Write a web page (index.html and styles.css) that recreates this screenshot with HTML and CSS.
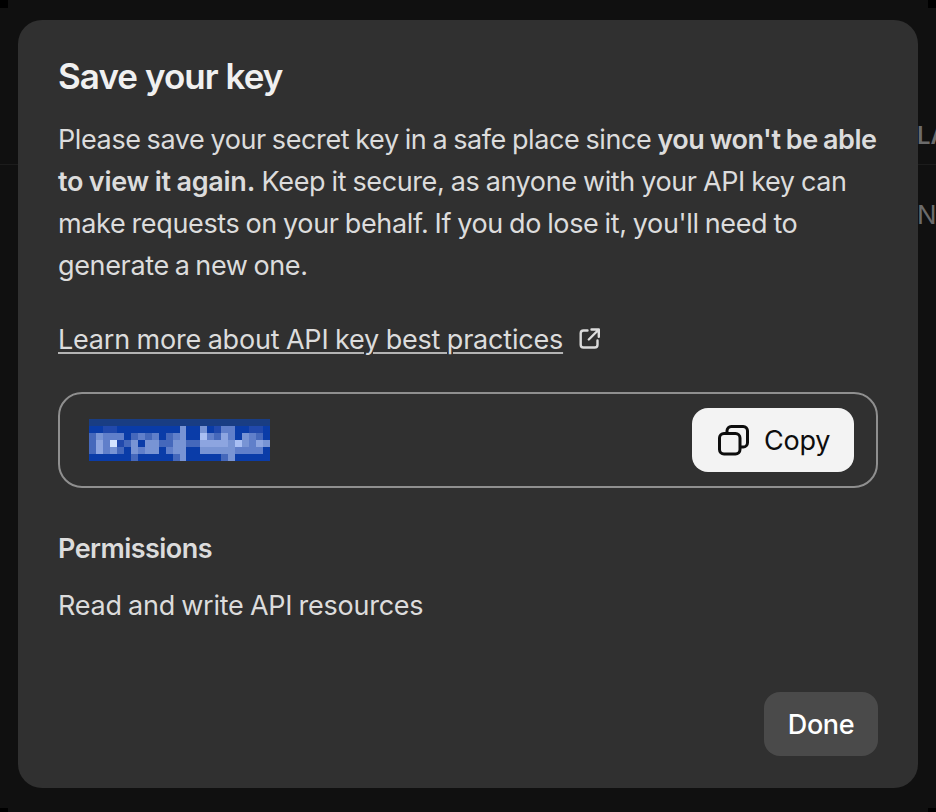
FILE: index.html
```html
<!DOCTYPE html>
<html lang="en">
<head>
<meta charset="utf-8">
<title>Save your key</title>
<link rel="stylesheet" href="styles.css">
</head>
<body>
<div class="page">
  <div class="backdrop" aria-hidden="true">
    <div class="table-head"><span>LA</span></div>
    <div class="table-row"><span>N</span></div>
  </div>
  <i class="corner tl"></i><i class="corner tr"></i><i class="corner bl"></i><i class="corner br"></i>
  <main class="modal">
    <h1 class="title">Save your key</h1>
    <p class="text"><span class="l1">Please save your secret key in a safe place since </span><strong class="b1">you won't be able</strong><br><strong class="b2">to view it again.</strong> <span class="l2">Keep it secure, as anyone with your API key can</span><br><span class="l3">make requests on your behalf. If you do lose it, you'll need to</span><br><span class="l4">generate a new one.</span></p>
    <div class="learn">
      <a class="link">Learn more about API key best practices</a>
      <svg class="external" viewBox="0 0 22 22" width="22" height="22"><path d="M8.500 2.500H4.500A2.800 2.800 0 0 0 1.700 5.300V16.700A2.800 2.800 0 0 0 4.500 19.500H15.700A2.800 2.800 0 0 0 18.500 16.700V12.500M12.500 1.500H19.800V8.800M19.300 2L9.800 11.500"/></svg>
    </div>
    <div class="field">
      <svg class="key" viewBox="0 0 26 6" width="181" height="42" preserveAspectRatio="none" shape-rendering="crispEdges">
        <path fill="#0a3ca8" d="M0 0h26v6H0z"/>
        <path fill="#193d83" d="M0 0h26v1H0z"/>
        <path fill="#2149ac" d="M2 1h2v1H2zM18 1h1v1h-1zM23 1h2v1h-2zM22 2h1v1h-1zM4 3h1v1H4z"/>
        <path fill="#4568bb" d="M0 2h1v3H0zM6 2h1v1H6zM8 2h1v1H8zM11 2h1v1h-1zM5 3h1v1H5zM10 3h2v1h-2zM14 3h2v1h-2zM4 4h1v1H4zM6 5h1v1H6zM12 5h1v1h-1zM19 5h1v1h-1zM18 2h1v1h-1zM24 2h1v1h-1z"/>
        <path fill="#607fca" d="M2 2h3v1H2zM2 3h1v2H2zM7 2h1v1H7zM9 2h1v1H9zM12 2h1v1h-1zM19 1h2v1h-2zM17 2h1v1h-1zM20 2h1v1h-1zM22 3h2v2h-2zM23 2h1v1h-1zM7 4h1v1H7zM11 4h1v1h-1zM21 4h1v1h-1zM24 4h1v1h-1z"/>
        <path fill="#7894d4" d="M1 2h1v1H1zM13 1h1v5h-1zM16 1h1v1h-1zM6 3h1v2H6zM8 3h2v2H8zM12 3h1v2h-1zM3 4h1v1H3zM16 4h4v1h-4zM20 3h1v3h-1zM22 2h1v2h-1zM25 3h1v1h-1z"/>
        <path fill="#8da5e0" d="M1 3h1v2H1zM16 3h4v1h-4zM19 2h1v1h-1zM24 3h1v1h-1z"/>
        <path fill="#a9bff3" d="M16 2h1v1h-1zM21 3h1v1h-1z"/>
        <path fill="#d5e4ff" d="M3 3h1v1H3z"/>
      </svg>
      <button class="copy"><svg viewBox="0 0 32 32" width="32" height="32"><rect x="2.500" y="9.500" width="20.500" height="20.500" rx="4.500"/><path d="M10 9.500V6.800A4.300 4.300 0 0 1 14.300 2.500H26.200A4.300 4.300 0 0 1 30.500 6.800V18.700A4.300 4.300 0 0 1 26.200 23H23"/></svg><span>Copy</span></button>
    </div>
    <h2 class="subtitle">Permissions</h2>
    <p class="perm">Read and write API resources</p>
    <div class="actions"><button class="done">Done</button></div>
  </main>
</div>
</body>
</html>
```
FILE: styles.css
```css
* { box-sizing: border-box; }
body { margin: 0; background: #101010; font-family: Inter, "Liberation Sans", sans-serif; }
.page { position: relative; width: 936px; height: 812px; padding: 20px 18px; overflow: hidden; }
.backdrop { position: absolute; inset: 0; font-size: 26px; color: #6b6b6b; }
.table-head { height: 165px; padding: 120px 0 0 917px; border-bottom: 1px solid #1c1c1c; font-size: 24px; font-weight: 600; line-height: 32px; white-space: nowrap; }
.table-row { padding: 34px 0 0 917px; line-height: 32px; white-space: nowrap; }
.corner { position: absolute; width: 8px; height: 8px; background: #000; }
.tl { left: 0; top: 0; }
.tr { right: 0; top: 0; }
.bl { left: 0; bottom: 0; height: 4px; }
.br { right: 0; bottom: 0; height: 4px; }
.modal { position: relative; display: flex; flex-direction: column; width: 900px; height: 768px; padding: 34px 40px 32px; border-radius: 24px; background: #303030; color: #dcdcdc; font-size: 27px; }
h1, h2, p { margin: 0; }
.title { color: #f0f0f0; font-size: 35px; line-height: 44px; font-weight: 600; letter-spacing: -0.95px; }
.text { margin-top: 21px; line-height: 42px; white-space: nowrap; }
strong { font-weight: 600; }
.l1 { letter-spacing: -0.39px; word-spacing: -1.2px; }
.l2 { letter-spacing: -0.38px; word-spacing: -0.9px; }
.l3 { letter-spacing: -0.35px; word-spacing: -1.15px; }
.l4 { letter-spacing: -0.35px; word-spacing: -1.4px; }
.b1 { letter-spacing: -0.45px; word-spacing: -1.1px; }
.b2 { letter-spacing: -0.25px; word-spacing: -0.9px; margin-right: -1px; }
.learn { display: flex; align-items: flex-start; gap: 16px; margin-top: 37px; }
.link { height: 30px; line-height: 32px; letter-spacing: -0.2px; word-spacing: -0.8px; text-decoration: underline; text-decoration-color: #b4b4b4; text-decoration-thickness: 2px; text-underline-offset: 3px; white-space: nowrap; }
.external { margin-top: 4px; fill: none; stroke: #dcdcdc; stroke-width: 2.4; stroke-linecap: round; stroke-linejoin: round; }
.field { display: flex; align-items: center; justify-content: space-between; height: 96px; margin-top: 38px; padding: 0 22px 0 29px; border: 2px solid #8f8f8f; border-radius: 24px; }
button { border: 0; font: inherit; }
.copy { display: flex; align-items: center; gap: 15px; width: 162px; height: 64px; padding: 0 0 0 25px; border-radius: 16px; background: #f3f3f3; color: #0d0d0d; letter-spacing: -0.2px; }
.copy svg { fill: none; stroke: #0d0d0d; stroke-width: 3; }
.subtitle { margin-top: 40px; font-size: 27px; line-height: 42px; font-weight: 600; letter-spacing: -0.55px; }
.perm { margin-top: 15px; line-height: 42px; letter-spacing: -0.25px; word-spacing: -1px; }
.actions { display: flex; justify-content: flex-end; margin-top: auto; }
.done { width: 114px; height: 64px; border-radius: 16px; background: #4a4a4a; color: #fff; font-weight: 500; padding: 0; letter-spacing: -0.4px; }
```
